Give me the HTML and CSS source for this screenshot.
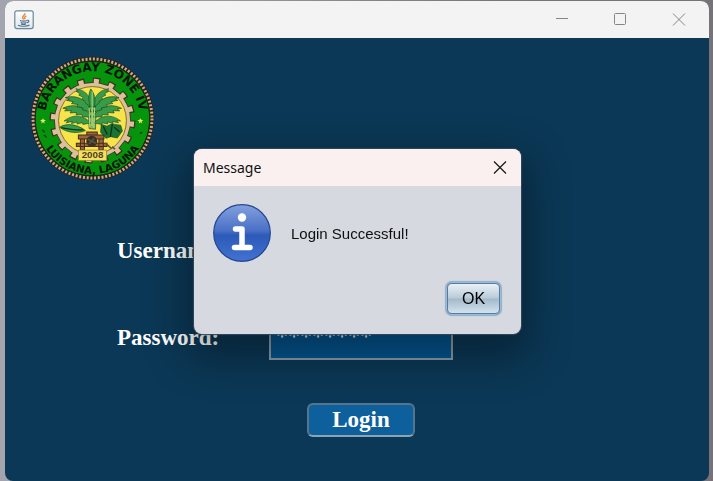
FILE: index.html
```html
<!DOCTYPE html>
<html lang="en">
<head>
<meta charset="utf-8">
<meta name="viewport" content="width=device-width, initial-scale=1">
<title>Login</title>
<link rel="stylesheet" href="styles.css">
</head>
<body>
<main class="window">
  <header class="titlebar">
    <svg class="java" viewBox="0 0 20 20" aria-hidden="true">
      <defs><linearGradient id="tile" x2="0" y2="1"><stop offset="0" stop-color="#fff"/><stop offset="1" stop-color="#dce6ee"/></linearGradient></defs>
      <rect x=".8" y=".8" width="18.4" height="17.8" rx="2" fill="url(#tile)" stroke="#6b8798" stroke-width="1.2"/>
      <path d="M10.8 3.2c1 2-3.3 2.700-2 5 .5.900 1 1 .9 1.500M12.300 5.800c-2.300 1.200-1.800 2-1.200 3.200" fill="none" stroke="#e58a3c" stroke-width="1.500"/>
      <path d="M6 10.500c2 .7 5 .7 7.200 0M6.700 12.400c1.800.7 4 .7 5.700 0M7 14c1.500.6 3.500.6 5 0M13.200 10.300c2.400-.6 2.200 2-.4 2.500M4 15.300c3 1.300 9 1.300 11.500-.3" fill="none" stroke="#51718b" stroke-width="1.100"/>
    </svg>
    <div class="controls">
      <button type="button" aria-label="Minimize"><svg viewBox="0 0 14 14"><path d="M0 5.500h12"/></svg></button>
      <button type="button" aria-label="Maximize"><svg viewBox="0 0 14 14"><rect x=".5" y=".5" width="11" height="11" rx="1"/></svg></button>
      <button type="button" aria-label="Close"><svg viewBox="0 0 14 14"><path d="M1 .5l12 12M13 .5L1 12.500"/></svg></button>
    </div>
  </header>
  <section class="content">
    <svg class="seal" viewBox="32 19 372 372" role="img" aria-label="Barangay Zone IV, Luisiana, Laguna seal">
      <defs>
        <path id="top-arc" d="M77 205a141 141 0 0 1 282 0"/>
        <path id="bottom-arc" d="M53 205a165 165 0 0 0 330 0"/>
        <path id="leaf" d="M0 4C-14-20-48-38-86-15l13 1-7 6 20-2-3 7 19-3-1 7 18-2 1 6z"/>
      </defs>
      <circle cx="218" cy="205" r="177" fill="#252018" stroke="#2b221b" stroke-width="13"/>
      <circle cx="218" cy="205" r="177" fill="none" stroke="#c9ab8b" stroke-width="9" stroke-dasharray="6 5.120"/>
      <circle cx="218" cy="205" r="170" fill="#07940d" stroke="#17300f" stroke-width="3"/>
      <circle cx="218" cy="211" r="117" fill="none" stroke="#3b3520" stroke-width="22" stroke-dasharray="22 23.950"/>
      <circle cx="218" cy="211" r="107" fill="#f8e34b" stroke="#423924" stroke-width="15"/>
      <circle cx="218" cy="211" r="115" fill="none" stroke="#dbc09a" stroke-width="18" stroke-dasharray="15 30.160" stroke-dashoffset="-3"/>
      <circle cx="218" cy="211" r="107" fill="#f8e34b" stroke="#dbc09a" stroke-width="10"/>
      <circle cx="218" cy="211" r="101" fill="none" stroke="#423924" stroke-width="2"/>
      <g fill="#379b48" stroke="#174d22" stroke-width="2">
        <path d="M208 235l-3-66 24-1-2 69z" fill="#80b65d"/>
        <use href="#leaf" transform="translate(212 215) rotate(-8) scale(.9)"/>
        <use href="#leaf" transform="translate(223 215) scale(-.9 .9) rotate(-8)"/>
        <use href="#leaf" transform="translate(214 197) rotate(5)"/>
        <use href="#leaf" transform="translate(220 197) scale(-1 1) rotate(5)"/>
        <use href="#leaf" transform="translate(215 182) rotate(17)"/>
        <use href="#leaf" transform="translate(219 182) scale(-1 1) rotate(17)"/>
        <use href="#leaf" transform="translate(215 168) rotate(38) scale(.8)"/>
        <use href="#leaf" transform="translate(220 168) scale(-.8 .8) rotate(38)"/>
        <path d="M211 170c-7-25-4-41 2-53 10 13 16 30 10 54z"/>
        <path d="M120 231c18-13 52-10 77 10-20 9-55 8-77-10z"/>
        <path d="M244 222l17 6 14-7 27 4 5 17-15 21-20-4-14 5-16-18z" fill="#1b7434"/>
      </g>
      <path d="M125 232c20 5 43 7 66 7M250 228l12 25M277 222l-6 38M282 230l17 15" fill="none" stroke="#0d351a" stroke-width="4"/>
      <path d="M208 174l2 57M217 125v103M224 173l-2 60" stroke="#b5d97b" stroke-width="3" fill="none"/>
      <g fill="#9b653b" stroke="#432c1c" stroke-width="3">
        <path d="M176 254h76v12h-76zM182 266h12v33h-12zM237 266h13v33h-13zM170 279h91v9h-91zM201 245h31v9h-31z"/>
        <circle cx="216" cy="273" r="15" fill="#333327"/>
      </g>
      <path d="M204 267l24 12M208 281l15-17M276 289l9 7M257 278l18 17" stroke="#5c533a" stroke-width="5"/>
      <rect x="176" y="299" width="84" height="31" fill="#f3df61" stroke="#937b29" stroke-width="2"/>
      <text class="seal-year" x="218" y="324">2008</text>
      <text class="seal-name"><textPath href="#top-arc" startOffset="50%">BARANGAY ZONE IV</textPath></text>
      <text class="seal-place"><textPath href="#bottom-arc" startOffset="50%">LUISIANA, LAGUNA</textPath></text>
      <path d="M71 204l2 5 6 1-5 4 2 6-5-4-5 4 1-6-5-4 6-1zM361 204l2 5 6 1-5 4 2 6-5-4-5 4 1-6-5-4 6-1z" fill="#e6e55b"/>
      <path d="M69 239l7 7M73 254l9 7M359 250l7-5" stroke="#103d12" stroke-width="4"/>
    </svg>
    <form class="login">
      <label for="username">Username:</label>
      <input id="username" type="text" autocomplete="off">
      <label for="password">Password:</label>
      <input id="password" type="text" value="********" autocomplete="off">
      <button class="submit" type="button">Login</button>
    </form>
  </section>
</main>
<dialog class="message" open aria-labelledby="message-title">
  <header class="message-bar">
    <h1 id="message-title">Message</h1>
    <button class="close" type="button" aria-label="Close message"><svg viewBox="0 0 14 14"><path d="M1 .5l12 12M13 .5L1 12.500"/></svg></button>
  </header>
  <div class="message-body">
    <svg class="info" viewBox="0 0 58 58" aria-hidden="true">
      <defs>
        <linearGradient id="blue" x2="0" y2="1"><stop offset="0" stop-color="#83a0df"/><stop offset=".46" stop-color="#4a70c6"/><stop offset=".54" stop-color="#2c5ab8"/><stop offset="1" stop-color="#4472d2"/></linearGradient>
      </defs>
      <circle cx="29" cy="29" r="28.300" fill="url(#blue)" stroke="#24478f" stroke-width="1.200"/>
      <circle cx="29" cy="13.500" r="4.200" fill="#fff"/>
      <path d="M22.500 25H29V43M21.500 43.500H37" fill="none" stroke="#fff" stroke-width="5.500" stroke-linecap="round" stroke-linejoin="round"/>
    </svg>
    <p>Login Successful!</p>
  </div>
  <div class="message-actions"><button class="ok" type="button">OK</button></div>
</dialog>
</body>
</html>
```
FILE: styles.css
```css
* { box-sizing: border-box; }

body {
  margin: 0;
  min-height: 100vh;
  padding: 1px 4px 0 5px;
  display: flex;
  background: linear-gradient(90deg, #a3a4ad, #98989f 30%, #77747a 70%, #777278);
  font-family: "Liberation Sans", sans-serif;
}

button { font: inherit; padding: 0; }

.window {
  flex: 1;
  border-radius: 8px;
  overflow: hidden;
  background: #0b3856;
}

.titlebar {
  height: 37px;
  padding: 0 16px 0 9px;
  display: flex;
  align-items: center;
  justify-content: space-between;
  background: #f3f3f3;
}

.java { width: 20px; height: 20px; }

.controls { display: flex; gap: 30px; }

.controls button {
  width: 28px;
  height: 28px;
  display: grid;
  place-items: center;
  border: 0;
  background: none;
}

.controls svg, .close svg {
  width: 14px;
  height: 14px;
  fill: none;
  stroke: #858585;
  stroke-width: 1;
}

.content { padding: 18px 25px 40px; }

.seal { display: block; width: 125px; height: 125px; }

.seal text {
  font-family: "DejaVu Sans", sans-serif;
  font-weight: bold;
  text-anchor: middle;
  fill: #051505;
}

.seal .seal-name { font-size: 36px; }
.seal .seal-place { font-size: 31px; }
.seal .seal-year { font-size: 29px; font-family: "Liberation Sans", sans-serif; fill: #4d421b; }

.login {
  display: grid;
  grid-template-columns: 152px 184px;
  row-gap: 43px;
  align-items: center;
  margin: 48px 0 0 87px;
  justify-content: start;
  font: bold 23px "Liberation Serif", serif;
  color: #fff;
}

.login input {
  width: 100%;
  height: 44px;
  padding: 0 5px 4px;
  border: 2px solid #8b9da9;
  border-radius: 0;
  background: #045590;
  color: #fff;
  font: 24px "Liberation Serif", serif;
}

.submit {
  grid-column: 1 / -1;
  margin-left: 190px;
  width: 108px;
  height: 34px;
  border: 2px solid #54758b;
  border-bottom-color: #8da4b2;
  border-radius: 6px;
  background: #0e609c;
  color: #fff;
}

.message {
  position: fixed;
  inset: 0;
  margin: auto;
  top: 2px;
  left: 2px;
  width: 327px;
  height: fit-content;
  padding: 0;
  border: 0;
  border-radius: 8px;
  overflow: hidden;
  background: #d6d9df;
  color: #101010;
  box-shadow: 0 0 1px 1px #34495b, 0 16px 40px 8px rgb(0 0 0 / 36%);
}

.message-bar {
  height: 37px;
  padding: 0 11px 0 9px;
  display: flex;
  align-items: center;
  justify-content: space-between;
  background: #f9f0ef;
}

.message-bar h1 { margin: 0; font: 14px "Noto Sans", sans-serif; }

.close {
  display: grid;
  place-items: center;
  width: 20px;
  height: 20px;
  border: 0;
  background: none;
}

.close svg { stroke: #181818; stroke-width: 1.2; }

.message-body {
  display: flex;
  align-items: center;
  gap: 20px;
  padding: 18px 19px 0;
}

.info { width: 58px; height: 58px; }

.message-body p { margin: 0; font-size: 15px; }

.message-actions {
  display: flex;
  justify-content: flex-end;
  padding: 20px 20px 19px;
}

.ok {
  width: 55px;
  height: 33px;
  border: 2px solid #557b9e;
  border-radius: 6px;
  outline: 1px solid #9dbbd4;
  outline-offset: -1px;
  background: linear-gradient(#eaf0f5, #b9cbd9 48%, #a3b9ca 52%, #d3e3ef);
  box-shadow: 0 0 1px 1px #8baecb;
  font-size: 16px;
}
```
